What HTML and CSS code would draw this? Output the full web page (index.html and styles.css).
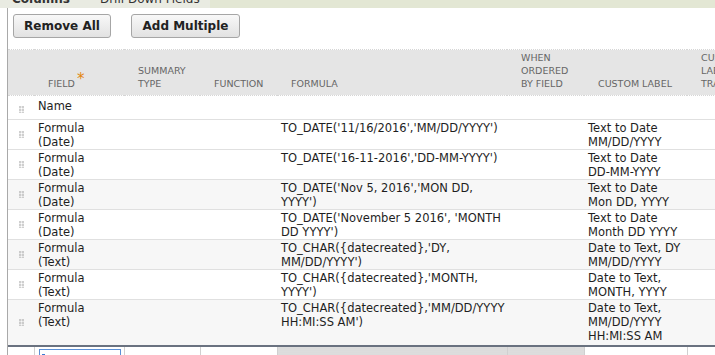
FILE: index.html
```html
<!DOCTYPE html>
<html>
<head>
<meta charset="utf-8">
<link rel="stylesheet" href="styles.css">
</head>
<body>
<div class="tabs">
  <span class="tab active">Columns</span>
  <span class="tab">Drill Down Fields</span>
  <span class="tab-rest"></span>
</div>
<div class="panel">
  <div class="toolbar">
    <button class="btn">Remove All</button>
    <button class="btn">Add Multiple</button>
  </div>
  <table class="grid">
    <colgroup>
      <col class="c-drag"><col class="c-field"><col class="c-summary"><col class="c-func"><col class="c-formula"><col class="c-when"><col class="c-label"><col class="c-trans">
    </colgroup>
    <thead>
      <tr>
        <th></th>
        <th>FIELD<span class="req">*</span></th>
        <th>SUMMARY<br>TYPE</th>
        <th>FUNCTION</th>
        <th>FORMULA</th>
        <th>WHEN<br>ORDERED<br>BY FIELD</th>
        <th>CUSTOM LABEL</th>
        <th>CUSTOM<br>LABEL<br>TRANSLATION</th>
      </tr>
    </thead>
    <tbody>
      <tr class="first">
        <td class="drag"><span class="handle"></span></td>
        <td>Name</td><td></td><td></td><td></td><td></td><td></td><td></td>
      </tr>
      <tr>
        <td class="drag"><span class="handle"></span></td>
        <td>Formula<br>(Date)</td><td></td><td></td>
        <td>TO_DATE('11/16/2016','MM/DD/YYYY')</td><td></td>
        <td>Text to Date<br>MM/DD/YYYY</td><td></td>
      </tr>
      <tr>
        <td class="drag"><span class="handle"></span></td>
        <td>Formula<br>(Date)</td><td></td><td></td>
        <td>TO_DATE('16-11-2016','DD-MM-YYYY')</td><td></td>
        <td>Text to Date<br>DD-MM-YYYY</td><td></td>
      </tr>
      <tr class="alt">
        <td class="drag"><span class="handle"></span></td>
        <td>Formula<br>(Date)</td><td></td><td></td>
        <td>TO_DATE('Nov 5, 2016','MON DD,<br>YYYY')</td><td></td>
        <td>Text to Date<br>Mon DD, YYYY</td><td></td>
      </tr>
      <tr>
        <td class="drag"><span class="handle"></span></td>
        <td>Formula<br>(Date)</td><td></td><td></td>
        <td>TO_DATE('November 5 2016', 'MONTH<br>DD YYYY')</td><td></td>
        <td>Text to Date<br>Month DD YYYY</td><td></td>
      </tr>
      <tr class="alt">
        <td class="drag"><span class="handle"></span></td>
        <td>Formula<br>(Text)</td><td></td><td></td>
        <td>TO_CHAR({datecreated},'DY,<br>MM/DD/YYYY')</td><td></td>
        <td>Date to Text, DY<br>MM/DD/YYYY</td><td></td>
      </tr>
      <tr>
        <td class="drag"><span class="handle"></span></td>
        <td>Formula<br>(Text)</td><td></td><td></td>
        <td>TO_CHAR({datecreated},'MONTH,<br>YYYY')</td><td></td>
        <td>Date to Text,<br>MONTH, YYYY</td><td></td>
      </tr>
      <tr class="alt last">
        <td class="drag"><span class="handle"></span></td>
        <td>Formula<br>(Text)</td><td></td><td></td>
        <td>TO_CHAR({datecreated},'MM/DD/YYYY<br>HH:MI:SS AM')</td><td></td>
        <td>Date to Text,<br>MM/DD/YYYY<br>HH:MI:SS AM</td><td></td>
      </tr>
      <tr class="edit">
        <td></td>
        <td><span class="input"><span class="caret"></span></span></td>
        <td></td><td></td>
        <td class="dis"></td><td class="dis"></td>
        <td></td><td></td>
      </tr>
    </tbody>
  </table>
</div>
</body>
</html>
```
FILE: styles.css
```css
html, body {
  margin: 0;
  padding: 0;
  overflow: hidden;
  background: #fff;
  width: 715px;
  height: 355px;
}
body {
  font-family: "DejaVu Sans", Verdana, sans-serif;
  font-size: 11.5px;
  color: #1e1e1e;
}
.tabs {
  display: flex;
  height: 8px;
  overflow: hidden;
  background: #e3e7d4;
}
.tab {
  display: block;
  margin-top: -8px;
  line-height: 14px;
  padding: 0 10px;
  font-size: 12px;
  color: #333;
  background: #e9ebe2;
  white-space: nowrap;
}
.tab.active {
  font-weight: bold;
  padding-left: 12px;
  padding-right: 20px;
}
.tab-rest { flex: 1; }
.panel {
  margin-left: 7px;
  border-left: 1px solid #a9a9a9;
  height: 347px;
}
.toolbar {
  display: flex;
  gap: 20px;
  padding: 6px 0 0 5px;
  height: 35px;
}
.btn {
  height: 24px;
  padding: 0;
  white-space: nowrap;
  text-align: center;
  font-family: "DejaVu Sans", Verdana, sans-serif;
  font-weight: bold;
  font-size: 12px;
  color: #222;
  border: 1px solid #a6a6a6;
  border-radius: 3px;
  background: linear-gradient(#f8f8f8, #e2e2e2);
}
.btn:first-child { width: 98px; }
.btn:nth-child(2) { width: 109px; }
.grid {
  border-collapse: collapse;
  table-layout: fixed;
  width: 760px;
}
.c-drag { width: 26px; }
.c-field { width: 90px; }
.c-summary { width: 76px; }
.c-func { width: 77px; }
.c-formula { width: 230px; }
.c-when { width: 77px; }
.c-label { width: 103px; }
.c-trans { width: 81px; }
th {
  height: 46px;
  box-sizing: border-box;
  background: #e5e5e5;
  border-top: 1px dotted #d6d6d6;
  border-bottom: 1px dotted #d6d6d6;
  vertical-align: bottom;
  text-align: left;
  font-weight: normal;
  font-size: 9.5px;
  line-height: 13px;
  color: #666;
  padding: 0 0 5px 14px;
  white-space: nowrap;
  overflow: hidden;
}
.req {
  color: #e2860f;
  font-size: 15px;
  position: relative;
  top: -3px;
  margin-left: 2px;
  line-height: 0;
}
td {
  vertical-align: top;
  padding: 1px 0 0 4px;
  line-height: 14px;
  border-top: 1px solid #e0e0e0;
  white-space: nowrap;
  overflow: hidden;
}
tr.first td { border-top: none; height: 24px; padding-top: 3px; box-sizing: border-box; }
tr.alt td { background: #f7f7f7; }
tr.last td { padding-bottom: 2px; }
tr.last td.drag { padding-bottom: 0; }
td.drag { vertical-align: middle; padding: 0 0 0 11px; }
.handle {
  display: block;
  width: 5px;
  height: 7px;
  background-image: radial-gradient(circle, #8c8c8c 0.8px, transparent 1.1px);
  background-size: 3px 3px;
  background-position: -0.5px -0.5px;
}
tr.edit td {
  height: 12px;
  border-top: 2px solid #6a7280;
  border-left: 1px solid #d0d0d0;
  padding: 0;
}
tr.edit td:first-child { border-left: none; }
tr.edit td.dis {
  background-color: #ececec;
  background-image: radial-gradient(circle, #d4d4d4 0.6px, transparent 0.9px);
  background-size: 2px 2px;
}
.input {
  display: block;
  margin: 2px 0 0 4px;
  width: 80px;
  height: 12px;
  border: 1px solid #5b8fd6;
  border-bottom: none;
  position: relative;
}
.caret {
  position: absolute;
  left: 2px;
  top: 4px;
  width: 3px;
  height: 8px;
  background: #3b7bd4;
}
```
